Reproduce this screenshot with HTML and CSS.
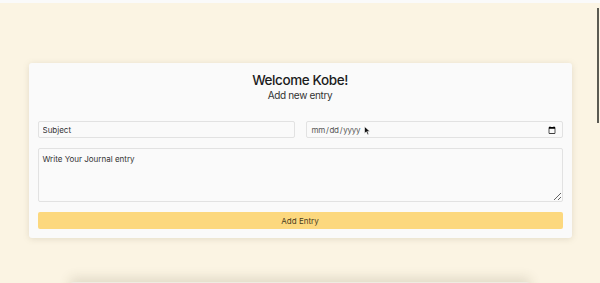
FILE: index.html
```html
<!DOCTYPE html>
<html lang="en">
<head>
  <meta charset="UTF-8">
  <meta name="viewport" content="width=device-width, initial-scale=1.0">
  <title>Journal</title>
  <link rel="stylesheet" href="styles.css">
</head>
<body>
  <div class="topbar"></div>

  <div class="card">
    <h1 class="title">Welcome Kobe!</h1>
    <div class="subtitle">Add new entry</div>

    <form class="entry-form" onsubmit="return false">
      <div class="row">
        <input class="field" type="text" placeholder="Subject">
        <input class="field date" type="date">
      </div>
      <textarea class="field body-text" placeholder="Write Your Journal entry"></textarea>
      <button class="add-btn" type="submit">Add Entry</button>
    </form>
  </div>

  <div class="card next"></div>

  <div class="scroll-thumb"></div>
  <svg class="pointer" width="7" height="10" viewBox="0 0 7 10">
    <path d="M0.5 0.5 L0.5 7.5 L2.3 5.8 L3.6 8.8 L4.8 8.3 L3.6 5.4 L6 5.4 Z" fill="#111" stroke="#fff" stroke-width="0.6"/>
  </svg>
</body>
</html>
```

FILE: styles.css
```css
body {
  margin: 0;
  background-color: #fbf4e3;
  font-family: Inter, "Noto Sans", sans-serif;
  color: #222;
  overflow: hidden;
}

.topbar {
  height: 3px;
  background-color: #fafafa;
}

.card {
  width: 525px;
  margin: 60px auto 0;
  padding: 8px 9px 9px;
  background-color: #fafafa;
  border-radius: 3px;
  box-shadow: 0 1px 6px rgba(120, 110, 80, 0.18);
}

.title {
  margin: 0;
  text-align: center;
  font-size: 13.5px;
  line-height: 18px;
  font-weight: 500;
  letter-spacing: -0.4px;
  color: #1c1c1c;
}

.subtitle {
  text-align: center;
  font-size: 10px;
  line-height: 13px;
  letter-spacing: -0.35px;
  color: #333;
}

.entry-form {
  display: flex;
  flex-direction: column;
  gap: 10px;
  margin-top: 19px;
}

.row {
  display: flex;
  gap: 11px;
}

.row .field {
  flex: 1;
  min-width: 0;
}

.field {
  box-sizing: border-box;
  height: 17px;
  margin: 0;
  padding: 0 4px;
  border: 1px solid #e2e2e2;
  border-radius: 2px;
  background-color: #fafafa;
  font-family: Inter, "Noto Sans", sans-serif;
  font-size: 8px;
  color: #333;
  outline: none;
}

.field::placeholder {
  color: #333;
}

.date {
  color: #555;
  letter-spacing: -0.3px;
}

.body-text {
  height: 54px;
  padding: 5px 4px;
  resize: vertical;
}

.add-btn {
  height: 17px;
  border: none;
  border-radius: 2px;
  background-color: #fcd87e;
  font-family: Inter, "Noto Sans", sans-serif;
  font-size: 8px;
  color: #4a3c1e;
  cursor: pointer;
}

.next {
  width: 460px;
  height: 40px;
  margin-top: 44px;
  padding: 0;
  background-color: #efece2;
  box-shadow: 0 -4px 12px rgba(90, 80, 50, 0.16);
}

.scroll-thumb {
  position: fixed;
  top: 8px;
  right: 1px;
  width: 2px;
  height: 115px;
  background-color: #5b5a52;
}

.pointer {
  position: fixed;
  left: 364px;
  top: 126px;
}
```
